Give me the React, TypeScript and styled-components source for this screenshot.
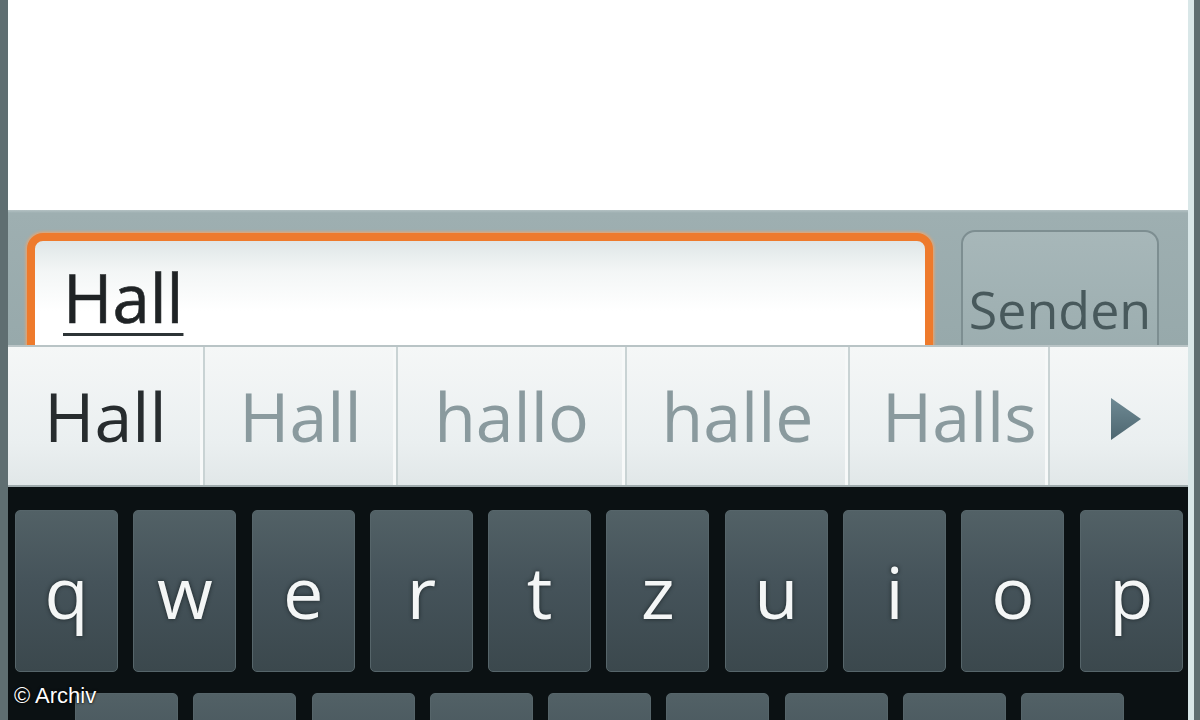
import React from 'react';
import styled, { createGlobalStyle } from 'styled-components';

type Suggestion = {
  word: string;
  width: number;
  typed?: boolean;
  clipped?: boolean;
};

const suggestions: Suggestion[] = [
  { word: 'Hall', width: 197, typed: true },
  { word: 'Hall', width: 193 },
  { word: 'hallo', width: 229 },
  { word: 'halle', width: 223 },
  { word: 'Halls', width: 200, clipped: true },
];

// second row is cut off by the bottom of the shot, only the key tops show
const keyRows: string[][] = [
  ['q', 'w', 'e', 'r', 't', 'z', 'u', 'i', 'o', 'p'],
  ['', '', '', '', '', '', '', '', ''],
];

const GlobalStyle = createGlobalStyle`
  html, body {
    margin: 0;
    height: 720px;
    overflow: hidden;
    background: #5f6e71;
  }
  #root {
    height: 720px;
  }
`;

const Screen = styled.div`
  position: relative;
  margin-left: 8px;
  width: 1180px;
  height: 720px;
  border-right: 6px solid #d9e7e8;
  display: flex;
  flex-direction: column;
  overflow: hidden;
  font-family: 'Open Sans', 'DejaVu Sans', sans-serif;
`;

const MessageArea = styled.div`
  height: 210px;
  flex-shrink: 0;
  background: #ffffff;
`;

const ComposeBar = styled.div`
  height: 135px;
  flex-shrink: 0;
  box-sizing: border-box;
  display: flex;
  align-items: flex-start;
  gap: 28px;
  padding: 22px 28px 0 19px;
  overflow: hidden;
  background: linear-gradient(#b4c2c4 0, #9eafb1 3px, #97a9ab 100%);
`;

const InputBox = styled.div`
  width: 906px;
  height: 150px;
  flex-shrink: 0;
  box-sizing: border-box;
  margin-top: 1px;
  border: 8px solid #ee7a2c;
  border-radius: 16px;
  box-shadow: 0 0 3px 1px #f3a468;
  background: linear-gradient(#dfe6e7 0, #f3f6f6 30px, #ffffff 70px);
  padding: 23px 0 0 28px;
`;

const ComposingText = styled.span`
  font-size: 67px;
  line-height: 1;
  color: #1f2325;
  text-decoration: underline;
  text-decoration-thickness: 3px;
  text-underline-offset: 10px;
  text-decoration-color: #2d3436;
  -webkit-text-stroke: 0.6px #1f2325;
`;

const SendButton = styled.div`
  width: 198px;
  height: 150px;
  flex-shrink: 0;
  box-sizing: border-box;
  margin-top: -2px;
  border: 2px solid #7d8e91;
  border-radius: 14px;
  background: linear-gradient(#a7b7b9, #99abad);
  padding-top: 51px;
  text-align: center;
  font-size: 52px;
  line-height: 1;
  color: #48595c;
`;

const SuggestionStrip = styled.div`
  height: 142px;
  flex-shrink: 0;
  box-sizing: border-box;
  display: flex;
  border-top: 2px solid #b9c4c6;
  border-bottom: 2px solid #9eaaac;
  background: linear-gradient(#f5f7f7, #eaeff0 70%, #e1e7e8);
`;

const SuggestionCell = styled.div<{ $width: number; $clipped?: boolean }>`
  width: ${(p) => p.$width}px;
  flex-shrink: 0;
  display: flex;
  align-items: center;
  justify-content: ${(p) => (p.$clipped ? 'flex-start' : 'center')};
  padding-left: ${(p) => (p.$clipped ? '32px' : '0')};
  box-sizing: border-box;
  overflow: hidden;
  white-space: nowrap;
  border-right: 2px solid #c9d3d4;
  box-shadow: inset -3px 0 0 #f7f9f9;
`;

const SuggestionWord = styled.span<{ $typed?: boolean }>`
  font-size: 68px;
  line-height: 1;
  color: ${(p) => (p.$typed ? '#272c2e' : '#8a9a9e')};
`;

const MoreCell = styled.div`
  flex: 1;
  display: flex;
  align-items: center;
  justify-content: center;
  padding-left: 14px;
  padding-top: 6px;
`;

const Keyboard = styled.div`
  flex: 1;
  min-height: 0;
  overflow: hidden;
  display: flex;
  flex-direction: column;
  gap: 21px;
  padding: 23px 0 0 7px;
  background: #0b1113;
`;

const KeyRow = styled.div<{ $indent: number }>`
  display: flex;
  flex-shrink: 0;
  gap: 15.3px;
  padding-left: ${(p) => p.$indent}px;
`;

const Key = styled.div`
  width: 103px;
  height: 162px;
  flex-shrink: 0;
  box-sizing: border-box;
  display: flex;
  align-items: center;
  justify-content: center;
  border-radius: 5px;
  border: 1px solid #56656a;
  background: linear-gradient(#526166 0%, #45535a 45%, #3b484d 100%);
  color: #f4f6f6;
  font-size: 72px;
  line-height: 1;
  text-shadow: 0 0 4px #1a2326;
`;

const Credit = styled.div`
  position: absolute;
  left: 6px;
  bottom: 11px;
  font-family: 'Liberation Sans', Arial, sans-serif;
  font-size: 22px;
  color: #ffffff;
  text-shadow: 0 0 3px #000000, 0 0 1px #000000;
`;

const ArrowIcon = () => (
  <svg width="32" height="44" viewBox="0 0 32 44">
    <defs>
      <linearGradient id="arrowFill" x1="0" y1="0" x2="0" y2="1">
        <stop offset="0" stopColor="#6f8a94" />
        <stop offset="1" stopColor="#4d6670" />
      </linearGradient>
    </defs>
    <polygon points="1,1 31,22 1,43" fill="url(#arrowFill)" />
  </svg>
);

const App = (): React.ReactElement => (
  <>
    <GlobalStyle />
    <Screen>
      <MessageArea />
      <ComposeBar>
        <InputBox>
          <ComposingText>Hall</ComposingText>
        </InputBox>
        <SendButton>Senden</SendButton>
      </ComposeBar>
      <SuggestionStrip>
        {suggestions.map((s, i) => (
          <SuggestionCell key={i} $width={s.width} $clipped={s.clipped}>
            <SuggestionWord $typed={s.typed}>{s.word}</SuggestionWord>
          </SuggestionCell>
        ))}
        <MoreCell>
          <ArrowIcon />
        </MoreCell>
      </SuggestionStrip>
      <Keyboard>
        {keyRows.map((row, i) => (
          <KeyRow key={i} $indent={i === 0 ? 0 : 60}>
            {row.map((letter, j) => (
              <Key key={j}>{letter}</Key>
            ))}
          </KeyRow>
        ))}
      </Keyboard>
      <Credit>© Archiv</Credit>
    </Screen>
  </>
);

export default App;
